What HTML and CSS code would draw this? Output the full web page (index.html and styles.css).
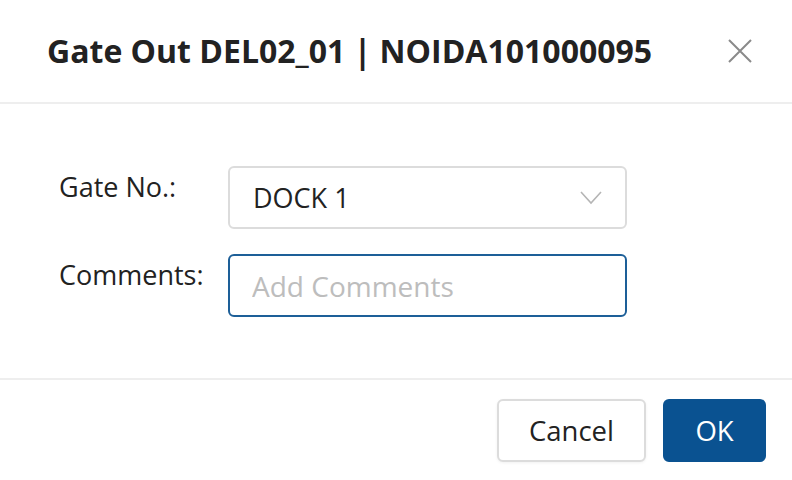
FILE: index.html
```html
<!DOCTYPE html>
<html>
<head>
  <meta charset="UTF-8">
  <title>Gate Out</title>
  <link rel="stylesheet" href="styles.css">
</head>
<body>
  <div class="modal">
    <div class="modal-header">
      <h2 class="modal-title">Gate Out DEL02_01 | NOIDA101000095</h2>
      <button type="button" class="close-btn" aria-label="Close">
        <svg width="24" height="24" viewBox="0 0 24 24">
          <path d="M1 1 L23 23 M23 1 L1 23" stroke="#8a8a8a" stroke-width="2" fill="none"/>
        </svg>
      </button>
    </div>

    <div class="modal-body">
      <div class="form-row">
        <label class="form-label">Gate No.:</label>
        <div class="select-box">
          <span>DOCK 1</span>
          <svg width="22" height="14" viewBox="0 0 22 14">
            <path d="M1 1 L11 12 L21 1" stroke="#b5b5b5" stroke-width="1.6" fill="none"/>
          </svg>
        </div>
      </div>
      <div class="form-row">
        <label class="form-label">Comments:</label>
        <input class="text-input" type="text" placeholder="Add Comments">
      </div>
    </div>

    <div class="modal-footer">
      <button type="button" class="btn btn-default">Cancel</button>
      <button type="button" class="btn btn-primary">OK</button>
    </div>
  </div>
</body>
</html>
```

FILE: styles.css
```css
:root {
  --primary: #0a5291;
  --border: #dcdcdc;
  --divider: #eeeeee;
  --text: #222222;
}

body {
  margin: 0;
  font-family: 'Open Sans', 'Noto Sans', Arial, sans-serif;
  color: var(--text);
  background: white;
}

.modal {
  width: 792px;
  height: 480px;
  display: flex;
  flex-direction: column;
}

.modal-header {
  height: 104px;
  border-bottom: 2px solid var(--divider);
  display: flex;
  align-items: center;
  justify-content: space-between;
  padding: 0 40px 0 47px;
  box-sizing: border-box;
}

.modal-title {
  margin: 0 0 2px;
  font-size: 32px;
  font-weight: 700;
  color: #222;
}

.close-btn {
  border: none;
  background: none;
  padding: 0;
  width: 24px;
  height: 24px;
  cursor: pointer;
}

.modal-body {
  flex: 1;
  padding: 62px 0 0 59px;
  display: flex;
  flex-direction: column;
  gap: 25px;
}

.form-row {
  display: flex;
  align-items: flex-start;
}

.form-label {
  width: 169px;
  font-size: 27px;
  padding-top: 2px;
}

.select-box,
.text-input {
  width: 399px;
  height: 63px;
  box-sizing: border-box;
  border-radius: 6px;
  font-family: inherit;
  font-size: 27px;
}

.select-box {
  border: 2px solid var(--border);
  display: flex;
  align-items: center;
  justify-content: space-between;
  padding: 0 23px 0 23px;
}

.text-input {
  border: 2px solid #1d5f98;
  padding: 0 22px;
  font-size: 28px;
  color: var(--text);
  outline: none;
}

.text-input::placeholder {
  color: #bdbdbd;
}

.modal-footer {
  height: 100px;
  border-top: 2px solid var(--divider);
  display: flex;
  justify-content: flex-end;
  align-items: center;
  gap: 17px;
  padding-right: 26px;
}

.btn {
  height: 63px;
  border-radius: 6px;
  font-family: inherit;
  font-size: 27.5px;
  cursor: pointer;
}

.btn-default {
  width: 149px;
  background: white;
  border: 2px solid var(--border);
  color: var(--text);
  box-shadow: 0 1px 3px rgba(0, 0, 0, 0.06);
}

.btn-primary {
  width: 103px;
  background: var(--primary);
  border: none;
  color: white;
}
```
